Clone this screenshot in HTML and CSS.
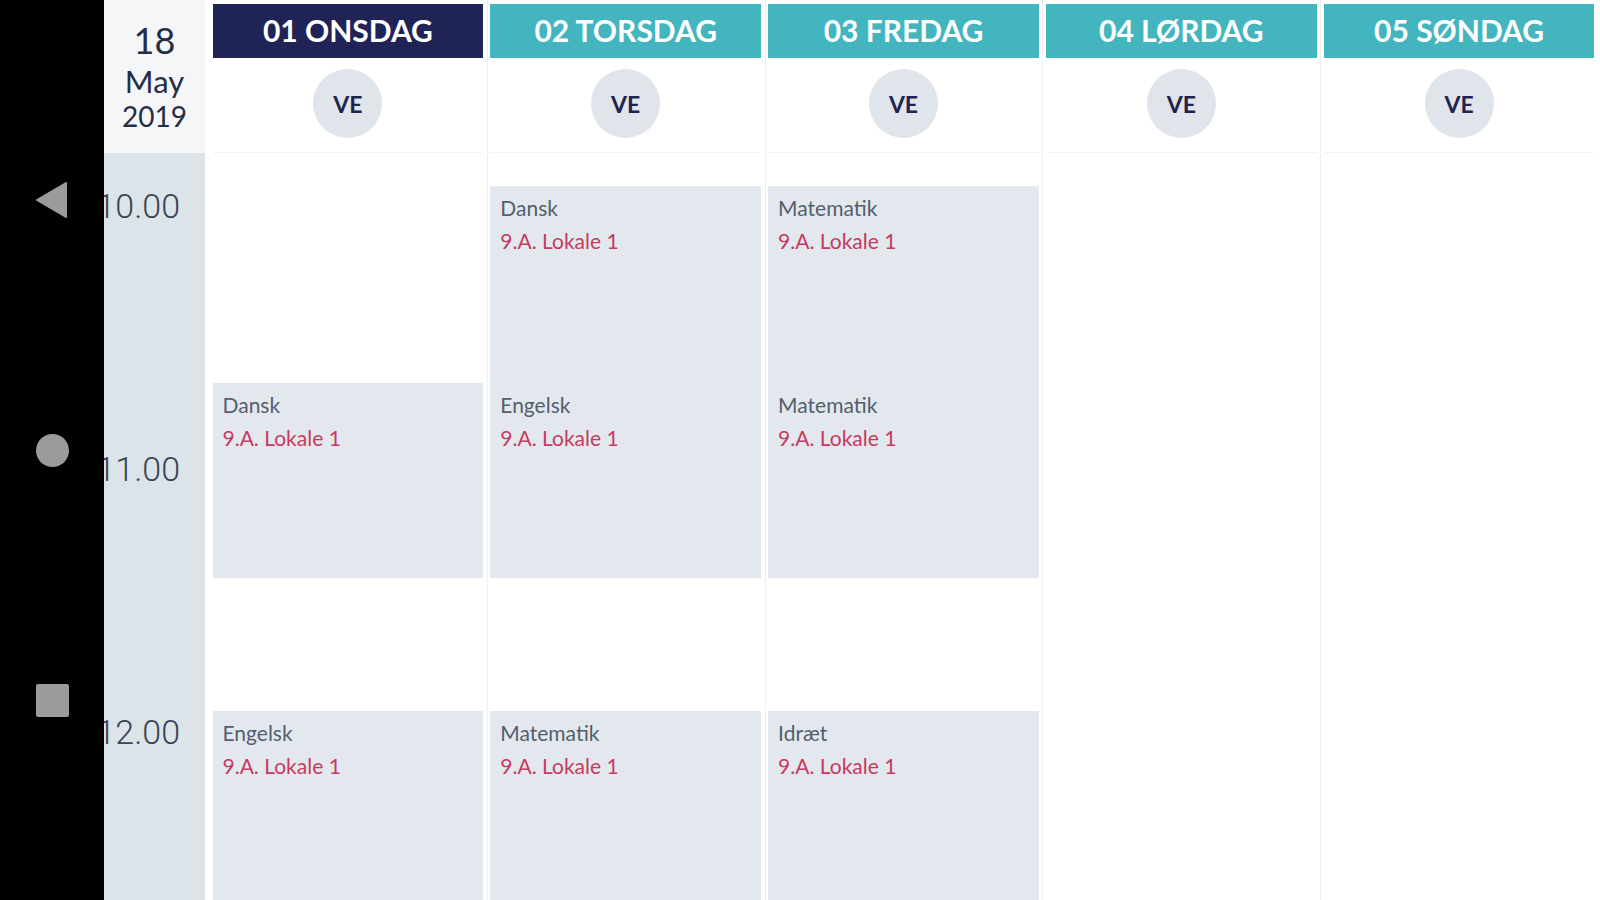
FILE: index.html
```html
<!DOCTYPE html>
<html lang="da">
<head>
<meta charset="utf-8">
<title>Skema</title>
<link rel="stylesheet" href="styles.css">
</head>
<body>
<nav class="sysnav">
  <div class="navbtn"><svg width="36" height="38" viewBox="0 0 36 38"><path d="M3 19 L32 2 L32 36 Z" fill="#9b9b9b" stroke="#9b9b9b" stroke-width="2" stroke-linejoin="round"/></svg></div>
  <div class="navbtn"><span class="nav-circle"></span></div>
  <div class="navbtn"><span class="nav-square"></span></div>
</nav>
<main class="planner">
  <div class="timecol">
    <div class="datecell">
      <div class="date-day">18</div>
      <div class="date-month">May</div>
      <div class="date-year">2019</div>
    </div>
    <div class="hours">
      <div class="hour">10.00</div>
      <div class="hour">11.00</div>
      <div class="hour">12.00</div>
    </div>
  </div>
  <div class="days">
    <section class="day">
      <div class="day-head today">01 ONSDAG</div>
      <div class="day-sub"><span class="avatar">VE</span></div>
      <div class="day-body">
        <div class="lesson" style="top:230px;height:195px"><div class="subject">Dansk</div><div class="room">9.A. Lokale 1</div></div>
        <div class="lesson" style="top:558px;height:197px"><div class="subject">Engelsk</div><div class="room">9.A. Lokale 1</div></div>
      </div>
    </section>
    <section class="day">
      <div class="day-head">02 TORSDAG</div>
      <div class="day-sub"><span class="avatar">VE</span></div>
      <div class="day-body">
        <div class="lesson" style="top:33px;height:197px"><div class="subject">Dansk</div><div class="room">9.A. Lokale 1</div></div>
        <div class="lesson" style="top:230px;height:195px"><div class="subject">Engelsk</div><div class="room">9.A. Lokale 1</div></div>
        <div class="lesson" style="top:558px;height:197px"><div class="subject">Matematik</div><div class="room">9.A. Lokale 1</div></div>
      </div>
    </section>
    <section class="day">
      <div class="day-head">03 FREDAG</div>
      <div class="day-sub"><span class="avatar">VE</span></div>
      <div class="day-body">
        <div class="lesson" style="top:33px;height:197px"><div class="subject">Matematik</div><div class="room">9.A. Lokale 1</div></div>
        <div class="lesson" style="top:230px;height:195px"><div class="subject">Matematik</div><div class="room">9.A. Lokale 1</div></div>
        <div class="lesson" style="top:558px;height:197px"><div class="subject">Idræt</div><div class="room">9.A. Lokale 1</div></div>
      </div>
    </section>
    <section class="day">
      <div class="day-head">04 LØRDAG</div>
      <div class="day-sub"><span class="avatar">VE</span></div>
      <div class="day-body"></div>
    </section>
    <section class="day">
      <div class="day-head">05 SØNDAG</div>
      <div class="day-sub"><span class="avatar">VE</span></div>
      <div class="day-body"></div>
    </section>
  </div>
</main>
</body>
</html>
```
FILE: styles.css
```css
* { box-sizing: border-box; }

body {
  margin: 0;
  width: 1600px;
  height: 900px;
  overflow: hidden;
  display: flex;
  background: #ffffff;
  font-family: Lato, "Noto Sans", sans-serif;
}

.sysnav {
  width: 104px;
  flex: none;
  height: 900px;
  background: #000000;
  display: flex;
  flex-direction: column;
  align-items: center;
  padding-top: 170px;
  gap: 190px;
}

.navbtn {
  width: 60px;
  height: 60px;
  display: flex;
  align-items: center;
  justify-content: center;
}

.nav-circle {
  width: 33px;
  height: 33px;
  border-radius: 50%;
  background: #9b9b9b;
}

.nav-square {
  width: 33px;
  height: 33px;
  border-radius: 2px;
  background: #9b9b9b;
}

.planner {
  flex: 1;
  display: flex;
  height: 900px;
}

.timecol {
  width: 101px;
  flex: none;
  overflow: hidden;
  display: flex;
  flex-direction: column;
}

.datecell {
  height: 153px;
  flex: none;
  background: #f5f6f8;
  color: #272c47;
  text-align: center;
  padding-top: 20px;
}

.date-day {
  font-size: 36px;
  line-height: 40px;
}

.date-month {
  font-size: 31px;
  line-height: 40px;
  margin-top: 1px;
}

.date-year {
  font-size: 28px;
  line-height: 30px;
}

.hours {
  flex: 1;
  background: #dce3e9;
  padding-top: 33px;
  padding-right: 25px;
}

.hour {
  height: 263px;
  display: flex;
  justify-content: flex-end;
  font-family: Roboto, "Liberation Sans", sans-serif;
  font-weight: 300;
  font-size: 34px;
  line-height: 40px;
  color: #3a4356;
}

.days {
  flex: 1;
  display: grid;
  grid-template-columns: repeat(5, 1fr);
  padding: 0 2px 0 4px;
}

.day {
  min-width: 0;
  padding: 4px 3.5px 0;
  display: flex;
  flex-direction: column;
  overflow: hidden;
}

.day + .day {
  box-shadow: inset 1px 0 0 #eef1f4;
}

.day-head {
  height: 54px;
  flex: none;
  background: #43b5bf;
  color: #ffffff;
  font-weight: 700;
  font-size: 30px;
  padding-bottom: 3px;
  display: flex;
  align-items: center;
  justify-content: center;
}

.day-head.today {
  background: #1f2356;
}

.day-sub {
  height: 95px;
  flex: none;
  border-bottom: 1px solid #f1f3f6;
  display: flex;
  justify-content: center;
  padding-top: 11px;
}

.avatar {
  width: 69px;
  height: 69px;
  border-radius: 50%;
  background: #dfe5ea;
  color: #1f2350;
  font-weight: 700;
  font-size: 23px;
  display: flex;
  align-items: center;
  justify-content: center;
}

.day-body {
  flex: 1;
  position: relative;
}

.lesson {
  position: absolute;
  left: 0;
  right: 0;
  background: #e2e8ee;
  padding: 5px 10px;
  font-size: 21px;
  line-height: 33px;
}

.subject {
  color: #555e6c;
}

.room {
  color: #c63a60;
}
```
